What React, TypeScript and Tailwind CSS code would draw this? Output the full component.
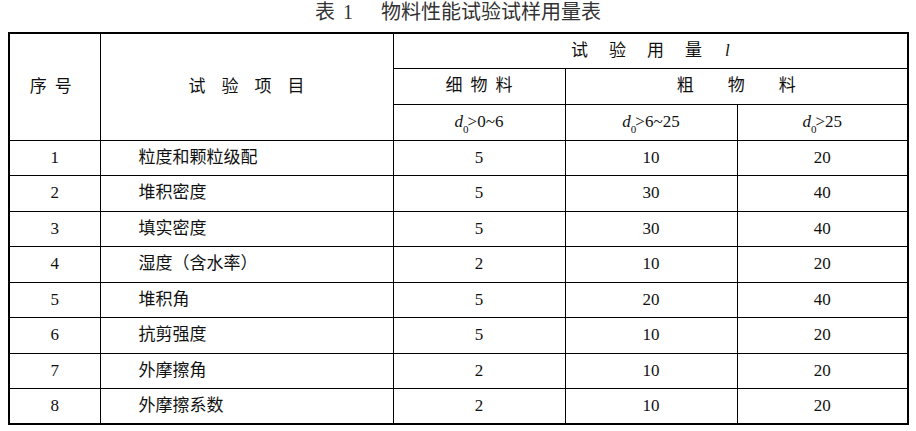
import React from "react";

const rows = [
  ["1", "粒度和颗粒级配", "5", "10", "20"],
  ["2", "堆积密度", "5", "30", "40"],
  ["3", "填实密度", "5", "30", "40"],
  ["4", "湿度（含水率）", "2", "10", "20"],
  ["5", "堆积角", "5", "20", "40"],
  ["6", "抗剪强度", "5", "10", "20"],
  ["7", "外摩擦角", "2", "10", "20"],
  ["8", "外摩擦系数", "2", "10", "20"],
];

// d0 with subscript zero, italic d
function D0({ rest }: { rest: string }) {
  return (
    <span>
      <span className="italic">d</span>
      <sub className="text-[11px] align-[-3px] mr-[-1px]">0</sub>
      {rest}
    </span>
  );
}

export default function App() {
  const font = "font-['Liberation_Serif','Noto_Sans_CJK_SC',serif]";
  const cell = "border border-black text-center";

  return (
    <div className={`w-[916px] h-[431px] bg-white text-[#111] ${font}`}>
      <div className="h-[32px] flex justify-center pt-[1px] text-[20px] leading-[22px] text-[#333]">
        <span>表</span>
        <span className="ml-[8px]">1</span>
        <span className="ml-[28px]">物料性能试验试样用量表</span>
      </div>

      <table className="ml-[8px] w-[899px] table-fixed border-collapse border-2 border-black text-[17px]">
        <colgroup>
          <col className="w-[91px]" />
          <col className="w-[293px]" />
          <col className="w-[172px]" />
          <col className="w-[172px]" />
          <col className="w-[171px]" />
        </colgroup>
        <thead>
          <tr className="h-[35px]">
            <th rowSpan={3} className={`${cell} font-normal tracking-[8px]`}>序号</th>
            <th rowSpan={3} className={`${cell} font-normal tracking-[16px]`}>
              <span className="ml-[16px]">试验项目</span>
            </th>
            <th colSpan={3} className={`${cell} font-normal`}>
              <span className="tracking-[21px]">试验用量</span>
              <span className="italic ml-[2px]">l</span>
            </th>
          </tr>
          <tr className="h-[36px]">
            <th className={`${cell} font-normal tracking-[8px]`}>
              <span className="ml-[8px]">细物料</span>
            </th>
            <th colSpan={2} className={`${cell} font-normal tracking-[34px]`}>
              <span className="ml-[34px]">粗物料</span>
            </th>
          </tr>
          <tr className="h-[36px]">
            <th className={`${cell} font-normal`}><D0 rest=">0~6" /></th>
            <th className={`${cell} font-normal`}><D0 rest=">6~25" /></th>
            <th className={`${cell} font-normal`}><D0 rest=">25" /></th>
          </tr>
        </thead>
        <tbody>
          {rows.map((r, i) => (
            <tr key={r[0]} className={i % 2 === 0 ? "h-[35px]" : "h-[36px]"}>
              <td className={cell}>{r[0]}</td>
              <td className="border border-black text-left pl-[38px]">{r[1]}</td>
              <td className={cell}>{r[2]}</td>
              <td className={cell}>{r[3]}</td>
              <td className={cell}>{r[4]}</td>
            </tr>
          ))}
        </tbody>
      </table>
    </div>
  );
}
